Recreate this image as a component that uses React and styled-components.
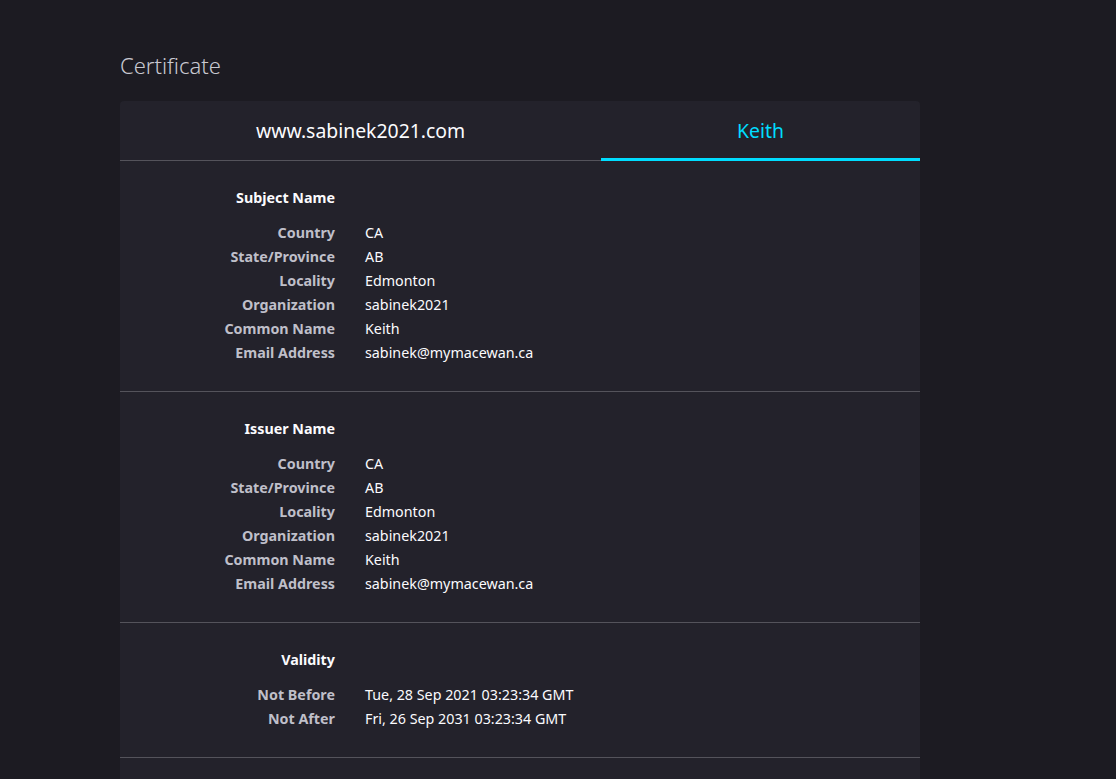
import React from "react";
import styled, { createGlobalStyle } from "styled-components";

const GlobalStyle = createGlobalStyle`
  html, body {
    margin: 0;
    background: #1c1b22;
    font-family: "Noto Sans", "Open Sans", sans-serif;
    color: #fbfbfe;
  }
`;

const sections = [
  {
    title: "Subject Name",
    rows: [
      ["Country", "CA"],
      ["State/Province", "AB"],
      ["Locality", "Edmonton"],
      ["Organization", "sabinek2021"],
      ["Common Name", "Keith"],
      ["Email Address", "sabinek@mymacewan.ca"],
    ],
  },
  {
    title: "Issuer Name",
    rows: [
      ["Country", "CA"],
      ["State/Province", "AB"],
      ["Locality", "Edmonton"],
      ["Organization", "sabinek2021"],
      ["Common Name", "Keith"],
      ["Email Address", "sabinek@mymacewan.ca"],
    ],
  },
  {
    title: "Validity",
    rows: [
      ["Not Before", "Tue, 28 Sep 2021 03:23:34 GMT"],
      ["Not After", "Fri, 26 Sep 2031 03:23:34 GMT"],
    ],
  },
];

const App = () => {
  return (
    <>
      <GlobalStyle />
      <Page>
        <Title>Certificate</Title>
        <Card>
          <Tabs>
            <Tab>www.sabinek2021.com</Tab>
            <Tab active>Keith</Tab>
          </Tabs>
          {sections.map((s) => (
            <Section key={s.title}>
              <Row>
                <Heading>{s.title}</Heading>
                <span />
              </Row>
              <Rows>
                {s.rows.map(([k, v]) => (
                  <Row key={k}>
                    <Label>{k}</Label>
                    <Value>{v}</Value>
                  </Row>
                ))}
              </Rows>
            </Section>
          ))}
          <Section />
        </Card>
      </Page>
    </>
  );
};

const Page = styled.main`
  padding: 49px 120px 0;
  width: 800px;
  height: 730px;
  overflow: hidden;
`;

const Title = styled.h1`
  margin: 0 0 20px;
  font-size: 22px;
  line-height: 32px;
  font-weight: 300;
  color: #c8c8d0;
`;

const Card = styled.div`
  background: #23222b;
  border-radius: 4px;
  overflow: hidden;
`;

const Tabs = styled.div`
  display: flex;
  border-bottom: 1px solid #54535b;
`;

const Tab = styled.div`
  flex: 1 1 auto;
  height: 59px;
  display: flex;
  align-items: center;
  justify-content: center;
  font-size: 19.4px;
  color: ${(p) => (p.active ? "#00ddff" : "#fbfbfe")};
  box-shadow: ${(p) => (p.active ? "inset 0 -3px 0 #00ddff" : "none")};
  margin-bottom: -1px;
  padding-bottom: 1px;
`;

const Section = styled.section`
  padding: 27px 0 26px;
  border-bottom: 1px solid #54535b;
  min-height: 40px;
`;

const Rows = styled.div`
  margin-top: 13px;
`;

const Row = styled.div`
  display: grid;
  grid-template-columns: 215px 1fr;
  column-gap: 30px;
  line-height: 24px;
  font-size: 14.3px;
`;

const Heading = styled.div`
  text-align: right;
  font-weight: 700;
  line-height: 20px;
  color: #fbfbfe;
`;

const Label = styled.div`
  text-align: right;
  font-weight: 700;
  color: #bfbfc9;
`;

const Value = styled.div`
  color: #fbfbfe;
`;

export default App;
